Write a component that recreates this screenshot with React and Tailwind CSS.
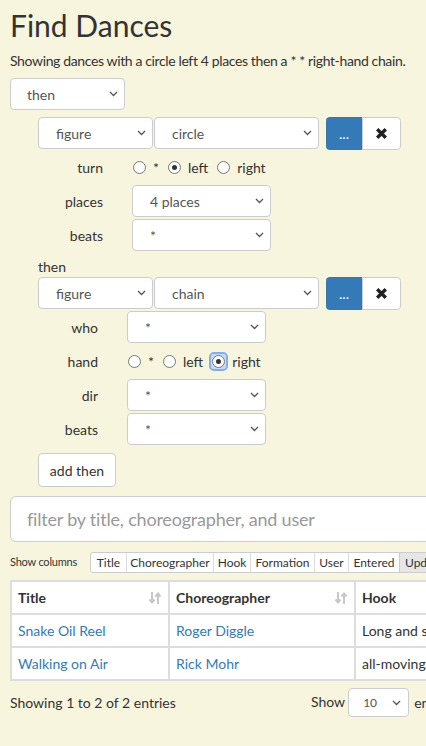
const font = { fontFamily: "Lato, 'Open Sans', sans-serif" };

const Chevron = () => (
  <svg width="9" height="6" viewBox="0 0 9 6" className="shrink-0">
    <path d="M1 1l3.5 3.5L8 1" fill="none" stroke="#555" strokeWidth="1.3" />
  </svg>
);

const Select = ({ value, className = "" }) => (
  <div className={`flex h-8 shrink-0 items-center justify-between rounded-[4px] border border-[#ccc] bg-white pr-[6px] text-[14px] text-[#555] ${className}`}>
    <span>{value}</span>
    <Chevron />
  </div>
);

const Radio = ({ checked, focused }) => (
  <span className={`flex h-[15px] w-[15px] items-center justify-center rounded-[3px] ${focused ? "bg-[#c9dcf5] outline-2 outline-[#86acea]" : ""}`}>
    <span className="flex h-[13px] w-[13px] items-center justify-center rounded-full border border-[#767676] bg-white">
      {checked && <span className="h-[5px] w-[5px] rounded-full bg-[#333]" />}
    </span>
  </span>
);

const RadioSet = ({ selected, focused }) => (
  <div className="flex h-8 items-center text-[14px] text-[#333]">
    {["*", "left", "right"].map((opt, i) => (
      <label key={opt} className={`flex items-center gap-[6px] ${i > 0 ? "ml-[8px]" : ""}`}>
        <Radio checked={opt === selected} focused={focused && opt === selected} />
        <span>{opt}</span>
      </label>
    ))}
  </div>
);

const FigureRow = ({ figure }) => (
  <div className="flex h-8 items-center">
    <Select value="figure" className="w-[115px] pl-[17px]" />
    <Select value={figure} className="ml-[1px] w-[165px] pl-[17px]" />
    <button className="ml-[7px] h-[33px] w-[36px] shrink-0 rounded-l-[4px] bg-[#337ab7] text-[14px] text-white">...</button>
    <button className="flex h-[33px] w-[39px] shrink-0 items-center justify-center rounded-r-[4px] border border-[#ccc] bg-white">
      <svg width="13" height="13" viewBox="0 0 13 13">
        <path d="M2.2 2.2l8.6 8.6M10.8 2.2l-8.6 8.6" stroke="#222" strokeWidth="3.4" />
      </svg>
    </button>
  </div>
);

const SubRow = ({ label, labelWidth, children }) => (
  <div className="mt-[2px] flex h-8 items-center">
    <div className={`${labelWidth} shrink-0 text-right text-[14px] text-[#333]`}>{label}</div>
    <div className="ml-[29px]">{children}</div>
  </div>
);

const SortIcon = () => (
  <svg width="14" height="14" viewBox="0 0 14 14" className="shrink-0">
    <g stroke="#c8c8c8" strokeWidth="2" fill="none">
      <path d="M4 1v10" />
      <path d="M1.5 8.5L4 11.5 6.5 8.5" />
      <path d="M10 13V3" />
      <path d="M7.5 5.5L10 2.5 12.5 5.5" />
    </g>
  </svg>
);

const columns = [
  ["Title", "w-[35px]"],
  ["Choreographer", "w-[87px]"],
  ["Hook", "w-[37px]"],
  ["Formation", "w-[64px]"],
  ["User", "w-[34px]"],
  ["Entered", "w-[51px]"],
];

const rows = [
  ["Snake Oil Reel", "Roger Diggle", "Long and short lines"],
  ["Walking on Air", "Rick Mohr", "all-moving"],
];

export default function App() {
  return (
    <div className="min-h-screen w-full overflow-hidden bg-[#f8f5de] px-[10px] text-[#333]" style={font}>
      <h1 className="pt-[7px] text-[30px] leading-[36px]">Find Dances</h1>
      <p className="mt-[8px] whitespace-nowrap text-[14px] leading-[20px] tracking-[-0.37px]">
        Showing dances with a circle left 4 places then a * * right-hand chain.
      </p>
      <Select value="then" className="mt-[7px] w-[115px] pl-[16px]" />

      <div className="ml-[28px]">
        <div className="mt-[7px]">
          <FigureRow figure="circle" />
        </div>
        <SubRow label="turn" labelWidth="w-[65px]">
          <RadioSet selected="left" />
        </SubRow>
        <SubRow label="places" labelWidth="w-[65px]">
          <Select value="4 places" className="w-[139px] pl-[17px]" />
        </SubRow>
        <SubRow label="beats" labelWidth="w-[65px]">
          <Select value="*" className="w-[139px] pl-[17px]" />
        </SubRow>

        <div className="mt-[6px] text-[14px] leading-[20px]">then</div>
        <FigureRow figure="chain" />
        <SubRow label="who" labelWidth="w-[60px]">
          <Select value="*" className="w-[139px] pl-[17px]" />
        </SubRow>
        <SubRow label="hand" labelWidth="w-[60px]">
          <RadioSet selected="right" focused />
        </SubRow>
        <SubRow label="dir" labelWidth="w-[60px]">
          <Select value="*" className="w-[139px] pl-[17px]" />
        </SubRow>
        <SubRow label="beats" labelWidth="w-[60px]">
          <Select value="*" className="w-[139px] pl-[17px]" />
        </SubRow>

        <button className="mt-[8px] h-[34px] w-[78px] rounded-[4px] border border-[#ccc] bg-white text-[14px] text-[#333]">
          add then
        </button>
      </div>

      <div className="mt-[9px] flex h-[46px] w-[600px] items-center rounded-[6px] border border-[#ccc] bg-white pl-[16px] text-[18px] tracking-[-0.2px] text-[#999]">
        filter by title, choreographer, and user
      </div>

      <div className="mt-[10px] flex h-[21px] items-center whitespace-nowrap">
        <span className="w-[80px] shrink-0 text-[11px] tracking-[-0.2px]">Show columns</span>
        <div className="flex h-[21px] shrink-0 rounded-[3px] border border-[#ccc] bg-white text-[12px]">
          {columns.map(([name, w], i) => (
            <span key={name} className={`flex ${w} shrink-0 items-center justify-center ${i > 0 ? "border-l border-[#ddd]" : ""}`}>
              {name}
            </span>
          ))}
          <span className="flex w-[64px] shrink-0 items-center border-l border-[#ccc] bg-[#e6e6e6] pl-[5px]">Updated</span>
        </div>
      </div>

      <table className="mt-[7px] w-[700px] border-collapse bg-white text-[14px]">
        <thead>
          <tr className="h-[33px]">
            <th className="w-[158px] border-2 border-[#ddd] px-[6px] text-left font-bold">
              <div className="flex items-center justify-between">
                <span>Title</span>
                <SortIcon />
              </div>
            </th>
            <th className="w-[186px] border-2 border-[#ddd] px-[6px] text-left font-bold">
              <div className="flex items-center justify-between">
                <span>Choreographer</span>
                <SortIcon />
              </div>
            </th>
            <th className="border-2 border-[#ddd] px-[6px] text-left font-bold">Hook</th>
          </tr>
        </thead>
        <tbody>
          {rows.map(([title, who, hook]) => (
            <tr key={title} className="h-[33px]">
              <td className="border-2 border-[#ddd] px-[6px] text-[#337ab7]">{title}</td>
              <td className="border-2 border-[#ddd] px-[6px] text-[#337ab7]">{who}</td>
              <td className="border-2 border-[#ddd] px-[6px] whitespace-nowrap">{hook}</td>
            </tr>
          ))}
        </tbody>
      </table>

      <div className="mt-[7px] flex items-start whitespace-nowrap text-[14px]">
        <div className="mt-[5px] w-[301px] shrink-0 leading-[20px]">Showing 1 to 2 of 2 entries</div>
        <div className="flex shrink-0 items-center">
          <span className="mr-[3px] -mt-[2px]">Show</span>
          <div className="flex h-[29px] w-[61px] shrink-0 items-center justify-between rounded-[4px] border border-[#ccc] bg-white pl-[14px] pr-[7px] text-[12px] text-[#555]">
            <span>10</span>
            <Chevron />
          </div>
          <span className="ml-[5px]">entries</span>
        </div>
      </div>
    </div>
  );
}
